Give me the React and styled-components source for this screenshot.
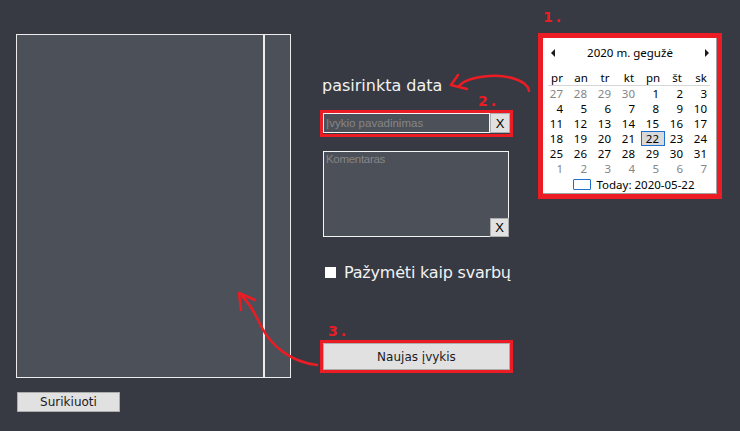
import React from 'react';
import styled, { createGlobalStyle } from 'styled-components';

const RED = '#ec1c24';
const PAGE = '#373a42';
const PANEL = '#4c5058';

const GlobalStyle = createGlobalStyle`
    html, body {
        margin: 0;
        padding: 0;
        background: ${PAGE};
    }
    * {
        box-sizing: border-box;
    }
`;

const dayNames = ['pr', 'an', 'tr', 'kt', 'pn', 'št', 'sk'];

// gegužė 2020 prasideda penktadienį, tinklelis nuo pirmadienio
const buildDays = () => {
    const days = [];
    [27, 28, 29, 30].forEach(d => days.push({ d, other: true }));
    for (let d = 1; d <= 31; d++) days.push({ d, other: false });
    for (let d = 1; days.length < 42; d++) days.push({ d, other: true });
    return days;
};

function App() {
    const days = buildDays();
    return (
        <>
            <GlobalStyle />
            <Window>
                <LeftColumn>
                    <ListFrame>
                        <MainList />
                        <SideStrip />
                    </ListFrame>
                    <SortButton>Surikiuoti</SortButton>
                </LeftColumn>

                <MiddleColumn>
                    <Title>pasirinkta data</Title>
                    <StepLabel align="right" pad="14px">
                        2.
                    </StepLabel>
                    <RedFrame>
                        <TitleInput placeholder="Įvykio pavadinimas" />
                        <ClearButton>X</ClearButton>
                    </RedFrame>
                    <CommentBox>
                        <CommentArea placeholder="Komentaras" />
                        <CornerButton>X</CornerButton>
                    </CommentBox>
                    <CheckRow>
                        <CheckBox />
                        <CheckText>Pažymėti kaip svarbų</CheckText>
                    </CheckRow>
                    <StepLabel align="left" pad="8px" top="43px">
                        3.
                    </StepLabel>
                    <ButtonFrame>
                        <NewButton>Naujas įvykis</NewButton>
                    </ButtonFrame>
                </MiddleColumn>

                <RightColumn>
                    <StepLabel align="left" pad="5px" bottom="10px">
                        1.
                    </StepLabel>
                    <CalendarFrame>
                        <Calendar>
                            <CalHeader>
                                <Arrow dir="left" />
                                <MonthTitle>2020 m. gegužė</MonthTitle>
                                <Arrow dir="right" />
                            </CalHeader>
                            <NamesGrid>
                                {dayNames.map(n => (
                                    <DayName key={n}>{n}</DayName>
                                ))}
                            </NamesGrid>
                            <Divider />
                            <DaysGrid>
                                {days.map((item, i) => (
                                    <DayCell
                                        key={i}
                                        other={item.other}
                                        selected={!item.other && item.d === 22}
                                    >
                                        {item.d}
                                    </DayCell>
                                ))}
                            </DaysGrid>
                            <TodayRow>
                                <TodayBox />
                                <span>Today: 2020-05-22</span>
                            </TodayRow>
                        </Calendar>
                    </CalendarFrame>
                </RightColumn>

                <Arrows viewBox="0 0 740 431">
                    <path d="M529,91 C528,80 506,75 490,76 C476,77 464,80 459,86" />
                    <path d="M458,75 L451,85 L467,89" />
                    <path d="M317,365 C291,362 271,346 261,326 C255,313 249,303 242,296" />
                    <path d="M241,310 L239,293 L255,300" />
                </Arrows>
            </Window>
        </>
    );
}

export default App;

const Window = styled.div`
    position: relative;
    width: 740px;
    height: 431px;
    display: flex;
    align-items: flex-start;
    background: ${PAGE};
    font-family: 'DejaVu Sans', sans-serif;
    overflow: hidden;
`;

const LeftColumn = styled.div`
    display: flex;
    flex-direction: column;
    padding: 34px 0 0 16px;
`;

const ListFrame = styled.div`
    display: flex;
    width: 275px;
    height: 344px;
    background: ${PANEL};
    border: 1px solid #ececec;
`;

const MainList = styled.div`
    flex: 1;
`;

const SideStrip = styled.div`
    width: 27px;
    border-left: 2px solid #ececec;
`;

const GrayButton = styled.button`
    margin: 0;
    padding: 0;
    background: #e1e1e1;
    border: 1px solid #adadad;
    color: #1c1a22;
    font-family: 'DejaVu Sans', sans-serif;
    font-size: 12px;
    cursor: pointer;
`;

const SortButton = styled(GrayButton)`
    width: 103px;
    height: 20px;
    margin: 14px 0 0 1px;
    line-height: 18px;
`;

const MiddleColumn = styled.div`
    display: flex;
    flex-direction: column;
    width: 193px;
    margin-left: 29px;
    padding-top: 77px;
`;

const Title = styled.div`
    padding-left: 2px;
    font-size: 16px;
    line-height: 18px;
    color: #f2f2f2;
`;

const StepLabel = styled.div`
    height: 12px;
    margin-top: ${props => props.top || 0};
    margin-bottom: ${props => props.bottom || '3px'};
    padding: 0 ${props => (props.align === 'right' ? props.pad : 0)} 0
        ${props => (props.align === 'left' ? props.pad : 0)};
    text-align: ${props => props.align};
    font-family: 'DejaVu Sans', sans-serif;
    font-weight: bold;
    font-size: 14px;
    line-height: 12px;
    letter-spacing: 3px;
    color: ${RED};
`;

const RedFrame = styled.div`
    display: flex;
    border: 3px solid ${RED};
    padding-bottom: 1px;
`;

const TitleInput = styled.input`
    width: 167px;
    height: 20px;
    margin: 0;
    padding: 0 2px;
    background: ${PANEL};
    border: 1px solid #f4f4f4;
    color: #f0f0f0;
    font-family: 'Liberation Sans', sans-serif;
    font-size: 11.5px;
    outline: none;

    &::placeholder {
        color: #868686;
    }
`;

const ClearButton = styled(GrayButton)`
    width: 20px;
    height: 20px;
    font-family: 'Liberation Sans', sans-serif;
    font-size: 13px;
    color: #000;
`;

const CommentBox = styled.div`
    position: relative;
    width: 186px;
    height: 86px;
    margin: 14px 0 0 3px;
`;

const CommentArea = styled.textarea`
    display: block;
    width: 100%;
    height: 100%;
    margin: 0;
    padding: 1px 2px;
    resize: none;
    background: ${PANEL};
    border: 1px solid #f4f4f4;
    color: #f0f0f0;
    font-family: 'Liberation Sans', sans-serif;
    font-size: 11.5px;
    letter-spacing: -0.3px;
    outline: none;

    &::placeholder {
        color: #868686;
    }
`;

const CornerButton = styled(ClearButton)`
    position: absolute;
    right: 0;
    bottom: 0;
    width: 19px;
    height: 19px;
`;

const CheckRow = styled.div`
    display: flex;
    align-items: center;
    gap: 8px;
    height: 20px;
    margin-top: 25px;
    padding-left: 5px;
`;

const CheckBox = styled.span`
    width: 11px;
    height: 11px;
    background: #ffffff;
`;

const CheckText = styled.span`
    font-size: 16px;
    letter-spacing: -0.2px;
    color: #f2f2f2;
`;

const ButtonFrame = styled.div`
    display: flex;
    border: 3px solid ${RED};
`;

const NewButton = styled(GrayButton)`
    flex: 1;
    height: 27px;
`;

const RightColumn = styled.div`
    display: flex;
    flex-direction: column;
    margin-left: 25px;
    padding-top: 11px;
`;

const CalendarFrame = styled.div`
    width: 184px;
    height: 166px;
    border: 5px solid ${RED};
`;

const Calendar = styled.div`
    height: 100%;
    padding: 7px 2px 0 2px;
    background: #ffffff;
    box-shadow: inset -1px -1px 0 #a0a0a0;
    font-family: 'Noto Sans', sans-serif;
    font-size: 11.5px;
    color: #000;
`;

const CalHeader = styled.div`
    display: flex;
    align-items: center;
    justify-content: space-between;
    height: 15px;
    padding: 0 6px;
`;

const Arrow = styled.span`
    width: 0;
    height: 0;
    border-top: 4px solid transparent;
    border-bottom: 4px solid transparent;
    ${props =>
        props.dir === 'left'
            ? 'border-right: 4px solid #1a1a1a;'
            : 'border-left: 4px solid #1a1a1a;'}
`;

const MonthTitle = styled.span`
    line-height: 15px;
`;

const NamesGrid = styled.div`
    display: grid;
    grid-template-columns: repeat(7, 24px);
    margin-top: 11px;
    height: 14px;
    line-height: 14px;
    text-align: center;
`;

const DayName = styled.span``;

const Divider = styled.div`
    height: 1px;
    margin: 0 5px 0 3px;
    background: #d6d6d6;
`;

const DaysGrid = styled.div`
    display: grid;
    grid-template-columns: repeat(7, 24px);
    grid-auto-rows: 15px;
`;

const DayCell = styled.span`
    padding-right: ${props => (props.selected ? '5px' : '6px')};
    line-height: ${props => (props.selected ? '13px' : '15px')};
    text-align: right;
    color: ${props => (props.other ? '#858585' : '#000')};
    background: ${props => (props.selected ? '#d9d9d9' : 'transparent')};
    border: ${props => (props.selected ? '1px solid #1e6fd0' : 'none')};
`;

const TodayRow = styled.div`
    display: flex;
    align-items: center;
    justify-content: center;
    gap: 5px;
    height: 15px;
    margin-top: 1px;
    padding-left: 8px;
    line-height: 15px;
`;

const TodayBox = styled.span`
    width: 18px;
    height: 11px;
    border: 1px solid #1e6fd0;
    border-radius: 1px;
`;

const Arrows = styled.svg`
    position: absolute;
    top: 0;
    left: 0;
    width: 740px;
    height: 431px;
    pointer-events: none;

    path {
        fill: none;
        stroke: ${RED};
        stroke-width: 2.5;
        stroke-linecap: round;
        stroke-linejoin: round;
    }
`;
